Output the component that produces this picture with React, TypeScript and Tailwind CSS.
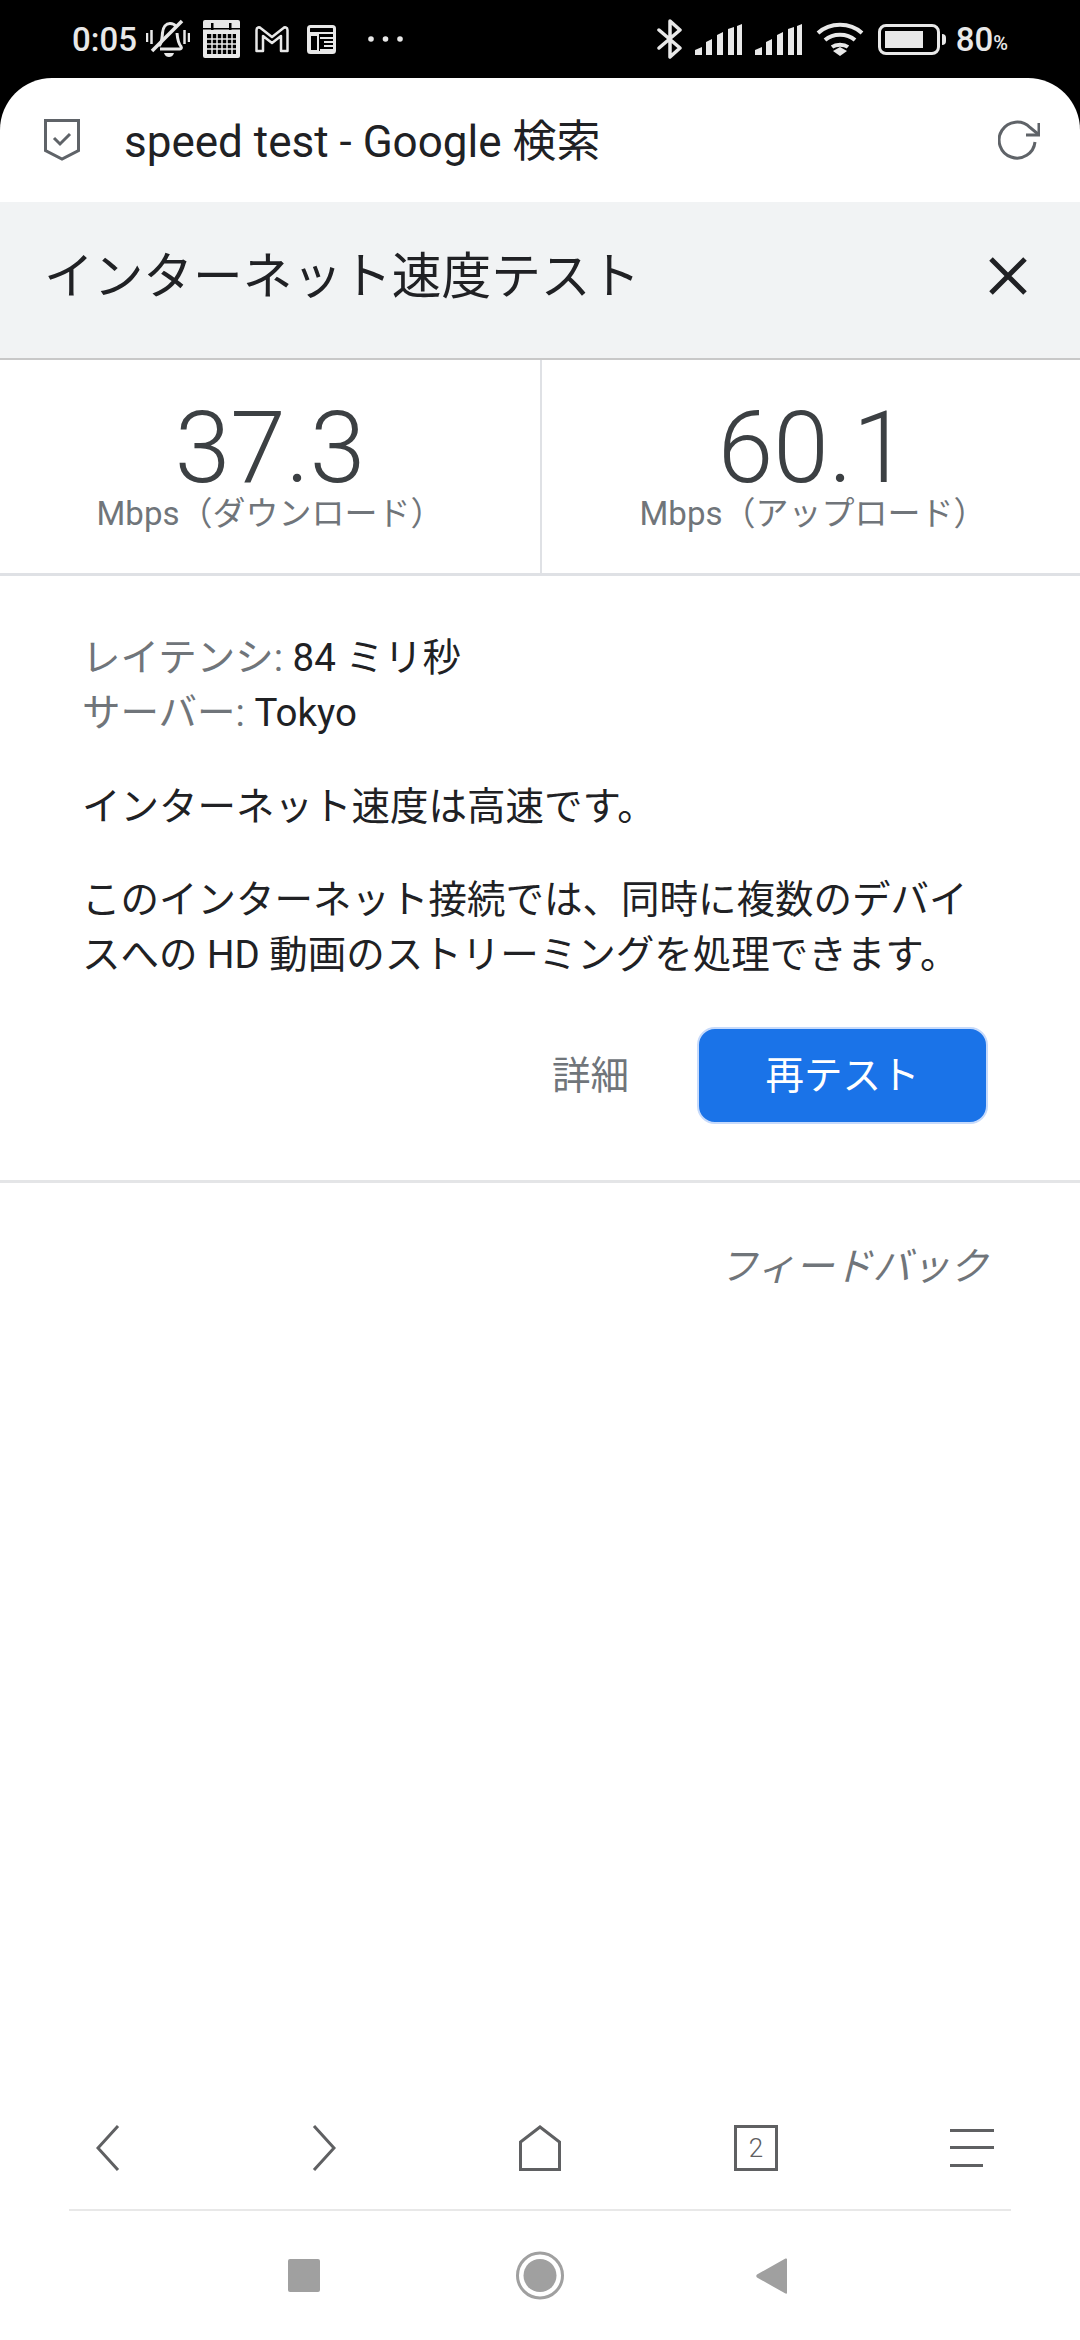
const StatusIcons = () => (
  <>
    {/* muted bell */}
    <svg width="44" height="40" viewBox="0 0 44 40" fill="none" stroke="#e8e8e8" className="ml-[9px]">
      <path d="M1 14v9M5.500 11v14M38.500 11v14M43 14v9" strokeWidth="2.500" />
      <path d="M13 27c3-3 3-8 3.500-13C17 8 20 4.500 24 4.500c3 0 5 1.500 6 3M31 14c.5 6 1 10 4 13.500 1 1.500 0 2.500-1 2.500H14" strokeWidth="3" />
      <path d="M36 2 6 32" strokeWidth="3.500" />
      <path d="M18 34h10c-1 3-3 4-5 4s-4-1-5-4z" fill="#e8e8e8" stroke="none" />
    </svg>
    {/* calendar */}
    <svg width="37" height="38" viewBox="0 0 37 38" className="ml-[13px]">
      <rect width="37" height="38" rx="2" fill="#e8e8e8" />
      <path d="M8 3h2.500v7H8zM26 3h2.500v7H26zM0 8h37v1.500H0z" fill="#000" />
      <rect x="4" y="14" width="29" height="20" fill="#000" />
      <path d="M9 14v20M14 14v20M19 14v20M24 14v20M29 14v20M4 19h29M4 24h29M4 29h29" stroke="#e8e8e8" strokeWidth="1.500" />
    </svg>
    {/* gmail outline */}
    <svg width="34" height="27" viewBox="0 0 34 27" fill="none" stroke="#e8e8e8" strokeWidth="2.500" strokeLinejoin="round" className="ml-[15px]">
      <path d="M1.500 4c0-3 3-3 4-2L17 11 28.500 2c1-1 4-1 4 2v21H26V10l-9 7-9-7v15H1.500z" />
    </svg>
    {/* news */}
    <svg width="29" height="29" viewBox="0 0 29 29" fill="none" stroke="#e8e8e8" className="ml-[18px]">
      <rect x="1.500" y="1.500" width="26" height="26" rx="2" strokeWidth="3" />
      <path d="M2 8h25M13 13h14M17 17h10M17 21h10M13 25h14" strokeWidth="2" />
      <path d="M3 10h8v16H3z" fill="none" strokeWidth="2" />
    </svg>
    {/* overflow dots */}
    <svg width="35" height="6" viewBox="0 0 35 6" fill="#e8e8e8" className="ml-[32px]">
      <circle cx="3" cy="3" r="2.800" />
      <circle cx="17.500" cy="3" r="2.800" />
      <circle cx="32" cy="3" r="2.800" />
    </svg>
  </>
)

const Signal = ({ className }: { className: string }) => (
  <svg width="48" height="31" viewBox="0 0 48 31" fill="#e8e8e8" className={className}>
    <path d="M0 31v-5l7-3v8zM11 31V18l6-3v16zM22 31V11l6-3v23zM33 31V5l6-2v28zM42 31V2l5-2v31z" />
  </svg>
)

const NavBar = () => (
  <div className="grid grid-cols-5 h-[122px] items-center justify-items-center">
    <svg width="24" height="46" viewBox="0 0 24 46" fill="none" stroke="#5f6062" strokeWidth="3">
      <path d="M22 1 2 23l20 22" />
    </svg>
    <svg width="24" height="46" viewBox="0 0 24 46" fill="none" stroke="#5f6062" strokeWidth="3">
      <path d="m2 1 20 22L2 45" />
    </svg>
    <svg width="42" height="46" viewBox="0 0 42 46" fill="none" stroke="#5f6062" strokeWidth="3">
      <path d="M1.500 44.500V17L21 2l19.500 15v27.500z" />
    </svg>
    <div className="w-[44px] h-[46px] border-[3px] border-[#5f6062] flex items-center justify-center text-[26px] font-light text-[#5f6062] leading-none">
      2
    </div>
    <svg width="44" height="38" viewBox="0 0 44 38" fill="#5f6062">
      <rect y="0" width="44" height="3" />
      <rect y="17" width="44" height="3" />
      <rect y="35" width="33" height="3" />
    </svg>
  </div>
)

const SystemBar = () => (
  <div className="flex items-center justify-center h-[129px] pr-[6px]">
    <div className="w-[32px] h-[33px] rounded-[2px] bg-[#a0a0a0]" />
    <svg width="48" height="49" viewBox="0 0 48 49" className="ml-[196px]">
      <circle cx="24" cy="24.500" r="22.500" fill="none" stroke="#a0a0a0" strokeWidth="3" />
      <circle cx="24" cy="24.500" r="16.500" fill="#a0a0a0" />
    </svg>
    <svg width="31" height="36" viewBox="0 0 31 36" fill="#a0a0a0" className="ml-[192px]">
      <path d="M31 1.500v33c0 1.500-1 1.500-2 .8L1 19.500c-1-.8-1-2 0-3L29 .8c1-.7 2-.3 2 .7z" />
    </svg>
  </div>
)

const App = () => {
  return (
    <div lang="ja" className="w-[1080px] h-[2340px] bg-black flex flex-col overflow-hidden font-['Roboto','Noto_Sans_CJK_JP',sans-serif]">
      {/* Status bar */}
      <div className="h-[78px] shrink-0 flex items-center justify-between pl-[72px] pr-[72px] text-[#e8e8e8]">
        <div className="flex items-center">
          <span className="text-[33px] leading-none font-medium">0:05</span>
          <StatusIcons />
        </div>
        <div className="flex items-center">
          <svg width="26" height="40" viewBox="0 0 26 40" fill="none" stroke="#e8e8e8" strokeWidth="3.500" strokeLinejoin="round" strokeLinecap="round">
            <path d="m2 11 21 18-10 9V2l10 9L2 29" />
          </svg>
          <Signal className="ml-[12px]" />
          <Signal className="ml-[12px]" />
          <svg width="48" height="34" viewBox="0 0 48 34" fill="none" stroke="#e8e8e8" strokeWidth="4" className="ml-[13px]">
            <path d="M2 11c12-11 32-11 44 0M9 18c8-7 22-7 30 0M16 25c4-3 12-3 16 0" />
            <path d="m17 29 7-4 7 4-7 5z" fill="#e8e8e8" stroke="none" />
          </svg>
          <div className="flex items-center ml-[14px]">
            <div className="w-[62px] h-[31px] rounded-[8px] border-[3px] border-[#e8e8e8] p-[4px]">
              <div className="w-[38px] h-full bg-[#e8e8e8]" />
            </div>
            <div className="w-[4px] h-[11px] ml-[2px] rounded-r-sm bg-[#e8e8e8]" />
          </div>
          <span className="ml-[10px] text-[33px] leading-none font-medium">80</span>
          <span className="text-[20px] leading-none mt-[8px] font-medium">%</span>
        </div>
      </div>

      <div className="flex-1 bg-white rounded-t-[52px] flex flex-col min-h-0">
        {/* URL bar */}
        <div className="h-[124px] shrink-0 flex items-center pl-[44px] pr-[40px]">
          <svg width="36" height="42" viewBox="0 0 36 42" fill="none" stroke="#5f6368" strokeWidth="3">
            <path d="M1.500 1.500h33v30L18 40 1.500 31.500z" />
            <path d="m10 19 6 6 10-10" />
          </svg>
          <span className="ml-[44px] mt-[4px] flex-1 text-[44px] leading-none text-[#202124]">speed test - Google 検索</span>
          <svg width="42" height="42" viewBox="0 0 42 42" fill="none" stroke="#5f6368" strokeWidth="3">
            <path d="M37 23a18 18 0 1 1-5-14.500L40 15" />
            <path d="M41 4v12H28" />
          </svg>
        </div>

        {/* Card header */}
        <div className="h-[156px] shrink-0 bg-[#f1f3f4] flex items-center justify-between pl-[44px] pr-[53px]">
          <span className="text-[49.700px] leading-none text-[#202124] -mt-[4px]">インターネット速度テスト</span>
          <svg width="38" height="38" viewBox="0 0 38 38" stroke="#202124" strokeWidth="5" className="-mt-[8px]">
            <path d="m2 2 34 34M36 2 2 36" />
          </svg>
        </div>

        {/* Results */}
        <div className="grid grid-cols-2 h-[218px] shrink-0 border-t-2 border-b-[3px] border-t-[#c8c8c8] border-b-[#dfe1e5]">
          <div className="flex flex-col items-center pt-[40px]">
            <span className="text-[100px] leading-[96px] font-light text-[#3c4043]">37.3</span>
            <span className="text-[33px] leading-[36px] text-[#70757a]">Mbps（ダウンロード）</span>
          </div>
          <div className="flex flex-col items-center pt-[40px] pl-[4px] border-l-2 border-[#dfe1e5]">
            <span className="text-[100px] leading-[96px] font-light text-[#3c4043]">60.1</span>
            <span className="text-[33px] leading-[36px] text-[#70757a]">Mbps（アップロード）</span>
          </div>
        </div>

        {/* Details */}
        <div className="pl-[82px] pr-[92px] pt-[54px] pb-[56px] border-b-[3px] border-[#e4e5e7] text-[38.500px] leading-[55px] text-[#202124]">
          <p><span className="text-[#70757a]">レイテンシ:</span> 84 ミリ秒</p>
          <p><span className="text-[#70757a]">サーバー:</span> Tokyo</p>
          <p className="mt-[39px]">インターネット速度は高速です。</p>
          <p className="mt-[38px] whitespace-nowrap">このインターネット接続では、同時に複数のデバイ<br />スへの HD 動画のストリーミングを処理できます。</p>
          <div className="mt-[45px] flex items-center justify-end">
            <span className="text-[#70757a] mr-[68px]">詳細</span>
            <button className="w-[291px] h-[97px] rounded-[18px] bg-[#1a73e8] border-2 border-[#c6dafb] text-white">再テスト</button>
          </div>
        </div>

        {/* Feedback */}
        <div className="pr-[92px] pt-[56px] text-right text-[38.500px] leading-[55px] italic text-[#70757a]">フィードバック</div>

        {/* Browser toolbar */}
        <div className="mt-auto">
          <NavBar />
          <div className="mx-[69px] h-[2px] bg-[#e8e8e8]" />
          <SystemBar />
        </div>
      </div>
    </div>
  )
}

export default App
